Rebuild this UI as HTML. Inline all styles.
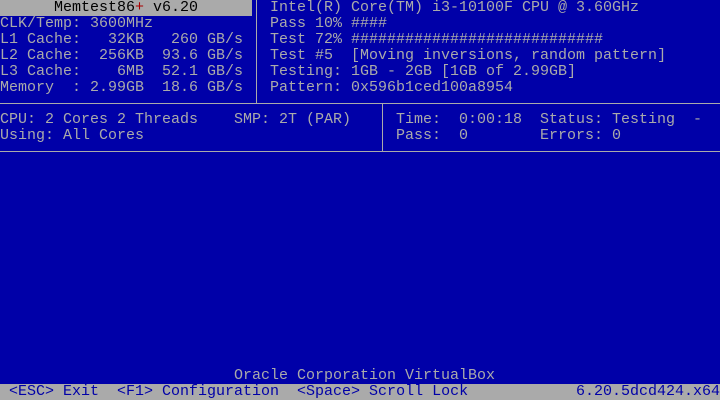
<!DOCTYPE html>
<html><head><style>
html,body{margin:0;padding:0;}
body{width:720px;height:400px;background:#0000a8;position:relative;overflow:hidden;font-family:"Liberation Mono",monospace;font-size:15px;color:#aaaaaa;}
.t{position:absolute;white-space:pre;line-height:16px;height:16px;}
.l{position:absolute;background:#aaaaaa;}
</style></head><body>
<div class="l" style="left:0;top:0;width:252px;height:16px"></div>
<div class="l" style="left:0;top:384px;width:720px;height:16px"></div>
<div class="l" style="left:256px;top:0;width:1px;height:104px"></div>
<div class="l" style="left:0;top:103px;width:720px;height:1px"></div>
<div class="l" style="left:382px;top:104px;width:1px;height:48px"></div>
<div class="l" style="left:0;top:151px;width:720px;height:1px"></div>

<div class="t" style="left:54px;top:0;color:#000">Memtest86<span style="color:#a80000">+</span> v6.20</div>
<div class="t" style="left:270px;top:0">Intel(R) Core(TM) i3-10100F CPU @ 3.60GHz</div>
<div class="t" style="left:0;top:16px">CLK/Temp: 3600MHz</div>
<div class="t" style="left:270px;top:16px">Pass 10% ####</div>
<div class="t" style="left:0;top:32px">L1 Cache:   32KB   260 GB/s</div>
<div class="t" style="left:270px;top:32px">Test 72% ############################</div>
<div class="t" style="left:0;top:48px">L2 Cache:  256KB  93.6 GB/s</div>
<div class="t" style="left:270px;top:48px">Test #5  [Moving inversions, random pattern]</div>
<div class="t" style="left:0;top:64px">L3 Cache:    6MB  52.1 GB/s</div>
<div class="t" style="left:270px;top:64px">Testing: 1GB - 2GB [1GB of 2.99GB]</div>
<div class="t" style="left:0;top:80px">Memory  : 2.99GB  18.6 GB/s</div>
<div class="t" style="left:270px;top:80px">Pattern: 0x596b1ced100a8954</div>

<div class="t" style="left:0;top:112px">CPU: 2 Cores 2 Threads    SMP: 2T (PAR)</div>
<div class="t" style="left:396px;top:112px">Time:  0:00:18  Status: Testing  -</div>
<div class="t" style="left:0;top:128px">Using: All Cores</div>
<div class="t" style="left:396px;top:128px">Pass:  0        Errors: 0</div>

<div class="t" style="left:234px;top:368px">Oracle Corporation VirtualBox</div>
<div class="t" style="left:9px;top:384px;color:#0000a8">&lt;ESC&gt; Exit  &lt;F1&gt; Configuration  &lt;Space&gt; Scroll Lock</div>
<div class="t" style="left:576px;top:384px;color:#0000a8">6.20.5dcd424.x64</div>
</body></html>
